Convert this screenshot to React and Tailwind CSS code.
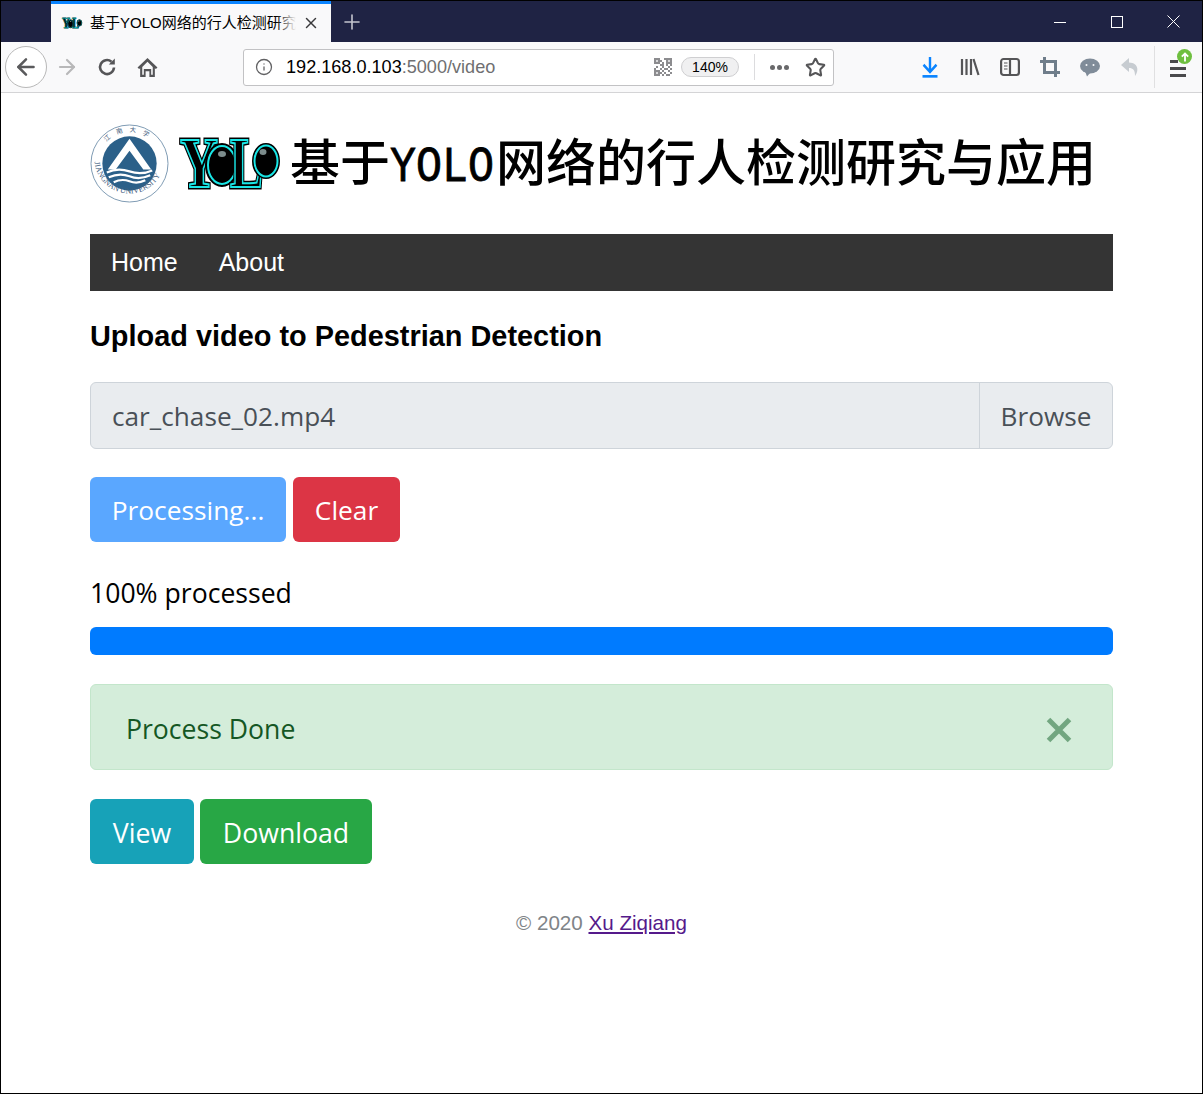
import { ArrowLeft, ArrowRight, Info, Star, X, Plus } from 'lucide-react'

const sans = { fontFamily: '"Liberation Sans", "Noto Sans CJK SC", sans-serif' }
const ui = { fontFamily: '"Open Sans", sans-serif' }

function YoloLogo({ className }) {
  const serif = { fontFamily: '"Liberation Serif", serif', fontWeight: 700 }
  const outer = { fill: '#000', stroke: '#000', strokeWidth: 5 }
  const inner = { fill: '#000', stroke: '#19e6e6', strokeWidth: 2 }
  return (
    <svg viewBox="0 0 100 54" className={`overflow-visible ${className}`}>
      <g style={serif}>
        <text x="1" y="50" fontSize="72" textLength="38" lengthAdjust="spacingAndGlyphs" {...outer}>Y</text>
        <text x="1" y="50" fontSize="72" textLength="38" lengthAdjust="spacingAndGlyphs" {...inner}>Y</text>
      </g>
      <ellipse cx="43" cy="28" rx="15" ry="20" fill="#000" stroke="#000" strokeWidth="4" />
      <ellipse cx="43" cy="28" rx="14" ry="19" fill="#000" stroke="#19e6e6" strokeWidth="2" />
      <g style={serif}>
        <text x="51" y="50" fontSize="72" textLength="33" lengthAdjust="spacingAndGlyphs" {...outer}>L</text>
        <text x="51" y="50" fontSize="72" textLength="33" lengthAdjust="spacingAndGlyphs" {...inner}>L</text>
      </g>
      <ellipse cx="87" cy="24" rx="12" ry="16" fill="#000" stroke="#000" strokeWidth="4" />
      <ellipse cx="87" cy="24" rx="11.500" ry="15.500" fill="#000" stroke="#19e6e6" strokeWidth="2" />
      <ellipse cx="43" cy="17" rx="4" ry="3" fill="#7c8c8c" />
      <ellipse cx="84" cy="15" rx="3.500" ry="3" fill="#7c8c8c" />
    </svg>
  )
}

function Emblem({ className }) {
  return (
    <svg viewBox="0 0 80 80" className={className}>
      <circle cx="40" cy="40" r="39" fill="#fff" stroke="#7e9ab3" strokeWidth="1" />
      <circle cx="40" cy="40" r="27.500" fill="#2b6089" />
      <path id="emblem-ring" d="M 4.500 35 A 35.500 35.500 0 0 0 75.500 35" fill="none" />
      <path d="M40 15 L62 46 L54 46 L40 27 L26 46 L18 46 Z" fill="#fff" />
      <path d="M17 49 Q28 44 40 48 T63 47 M19 54 Q30 49 40 53 T61 52 M24 59 Q32 55 40 58 T56 57" fill="none" stroke="#fff" strokeWidth="2.200" />
      <text fontSize="8" fill="#3f6080" style={{ fontFamily: '"Liberation Serif", serif' }}>
        <textPath href="#emblem-ring" startOffset="3%">JIANGNAN UNIVERSITY</textPath>
      </text>
      <path id="emblem-top" d="M 8 40 A 32 32 0 0 1 72 40" fill="none" />
      <text fontSize="6.500" fill="#3f6080" style={{ fontFamily: '"Noto Sans CJK SC", sans-serif' }}>
        <textPath href="#emblem-top" startOffset="24%">江　南　大　学</textPath>
      </text>
    </svg>
  )
}

function BrowserChrome() {
  return (
    <>
      <div className="h-[41px] bg-[#1f2344] flex items-stretch">
        <div className="w-[50px]" />
        <div className="w-[280px] bg-[#f9f9fa] border-t-[3px] border-[#0a84ff] flex items-center pl-[11px] pr-[11px]">
          <YoloLogo className="w-5 h-[11px] shrink-0" />
          <div className="ml-2 flex-1 relative overflow-hidden">
            <span className="block text-[15px] leading-[20px] text-black whitespace-nowrap" style={sans}>基于YOLO网络的行人检测研究</span>
            <div className="absolute inset-y-0 right-0 w-5 bg-gradient-to-r from-transparent to-[#f9f9fa]" />
          </div>
          <X size={18} strokeWidth={2} className="text-[#3a3a3c] ml-[6px] shrink-0" />
        </div>
        <div className="w-[42px] flex items-center justify-center">
          <Plus size={24} strokeWidth={1.6} className="text-[#c4c5ce]" />
        </div>
        <div className="flex-1" />
        <div className="flex items-center">
          <svg viewBox="0 0 12 12" className="w-3 h-3 mr-[45px]" stroke="#fff" fill="none" shapeRendering="crispEdges"><path d="M0 6.500H12" /></svg>
          <svg viewBox="0 0 12 12" className="w-3 h-3 mr-[44px]" stroke="#fff" fill="none" shapeRendering="crispEdges"><rect x="0.500" y="0.500" width="11" height="11" /></svg>
          <svg viewBox="0 0 13 13" className="w-[13px] h-[13px] mr-[22px]" stroke="#fff" fill="none"><path d="M0.500 0.500L12.500 12.500M12.500 0.500L0.500 12.500" /></svg>
        </div>
      </div>
      <div className="h-[51px] bg-[#f9f9fa] border-b border-[#d4d4d6] flex items-center relative">
        <div className="ml-[4px] w-[42px] h-[42px] rounded-full border border-[#b8b8b8] bg-white flex items-center justify-center shrink-0">
          <ArrowLeft size={26} strokeWidth={2.3} className="text-[#5a5a5c]" />
        </div>
        <ArrowRight size={24} strokeWidth={2.2} className="ml-[8px] text-[#b8b8b9] shrink-0" />
        <svg viewBox="0 0 20 20" className="ml-[18px] w-5 h-5 shrink-0" fill="none" stroke="#555557" strokeWidth="2.600">
          <path d="M17 10.500A7 7 0 1 1 14.500 4.700" />
          <path d="M17.800 1.500V7.500H11.800Z" fill="#555557" stroke="none" />
        </svg>
        <svg viewBox="0 0 20 20" className="ml-[20px] w-[21px] h-[21px] shrink-0" fill="#555557">
          <path d="M10 1 L0.500 10 L2 11.500 L3 10.700 V19 H8.200 V13.500 H11.800 V19 H17 V10.700 L18 11.500 L19.500 10 Z" />
          <path d="M5 9.500 L10 4.500 L15 9.500 V17 H13.500 V11.500 H6.500 V17 H5 Z" fill="#f9f9fa" />
        </svg>
        <div className="ml-[85px] w-[591px] h-[37px] rounded-[3px] border border-[#c2c2c4] bg-white flex items-center pl-[11px] pr-[7px] shrink-0">
          <Info size={18} strokeWidth={1.7} className="text-[#616163]" />
          <span className="ml-[13px] mt-[2px] text-[18.100px] text-black" style={sans}>192.168.0.103<span className="text-[#6f6f71]">:5000/video</span></span>
          <div className="flex-1" />
          {/* QR: damier serre */}
          <svg viewBox="0 0 9 9" className="w-[18px] h-[18px]" shapeRendering="crispEdges" fill="#8c8c8f">
            <path d="M0 0h3v3h-3z M6 0h3v3h-3z M0 6h3v3h-3z M3 1h1v1h-1z M5 0h1v1h-1z M4 2h1v1h-1z M3 3h2v1h-2z M6 3h1v1h-1z M8 3h1v1h-1z M1 4h1v1h-1z M4 4h1v1h-1z M7 4h1v1h-1z M0 5h1v1h-1z M3 5h1v1h-1z M5 5h2v1h-2z M8 5h1v1h-1z M4 6h1v1h-1z M7 6h1v1h-1z M3 7h1v1h-1z M5 7h1v1h-1z M8 7h1v1h-1z M4 8h1v1h-1z M6 8h2v1h-2z" />
            <path d="M1 1h1v1h-1z M7 1h1v1h-1z M1 7h1v1h-1z" fill="#d8d8da" />
          </svg>
          <div className="ml-[9px] w-[58px] h-[20px] rounded-full border border-[#cfcfd1] bg-[#f0f0f1] flex items-center justify-center text-[14px] text-black" style={sans}>140%</div>
          <div className="ml-[15px] w-px h-[26px] bg-[#dcdcde]" />
          <div className="ml-[15px] flex gap-[2px]">
            <span className="w-[5px] h-[5px] rounded-full bg-[#69696b]" />
            <span className="w-[5px] h-[5px] rounded-full bg-[#69696b]" />
            <span className="w-[5px] h-[5px] rounded-full bg-[#69696b]" />
          </div>
          <Star size={21} strokeWidth={2.4} className="ml-[16px] text-[#555557]" />
        </div>
        <svg viewBox="0 0 20 20" className="ml-[86px] w-5 h-[22px] shrink-0" fill="none" stroke="#0a84ff" strokeWidth="2.400" preserveAspectRatio="none">
          <path d="M10 1V14 M3.500 8L10 14.500L16.500 8" />
          <path d="M2.500 18.500H17.500" />
        </svg>
        <svg viewBox="0 0 20 20" className="ml-[20px] w-5 h-5 shrink-0" fill="none" stroke="#555557" strokeWidth="2.200">
          <path d="M2 2V18 M6.500 2V18 M11 2V18 M13.500 2L18.500 18" />
        </svg>
        <svg viewBox="0 0 20 20" className="ml-[20px] w-5 h-5 shrink-0" fill="none" stroke="#555557" strokeWidth="2.200">
          <rect x="1.100" y="2" width="17.800" height="16" rx="2.500" />
          <path d="M10 2V18" />
          <path d="M4 6H7.500M4 9H7.500M4 12H7.500" strokeWidth="1.200" />
        </svg>
        <svg viewBox="0 0 20 20" className="ml-[20px] w-5 h-5 shrink-0" fill="none" stroke="#6f7d8a" strokeWidth="3">
          <path d="M4.500 0V15.500H20" />
          <path d="M0 4.500H15.500V20" />
        </svg>
        <svg viewBox="0 0 20 20" className="ml-[20px] w-5 h-5 shrink-0" fill="#808c99">
          <ellipse cx="10" cy="9" rx="10" ry="7.500" />
          <path d="M5 14 L7 19.500 L11 15 Z" />
          <circle cx="6.500" cy="8" r="1" fill="#f9f9fa" />
          <circle cx="13.500" cy="8" r="1" fill="#f9f9fa" />
        </svg>
        <svg viewBox="0 0 20 20" className="ml-[20px] w-5 h-5 shrink-0" fill="#c7ccd1">
          <path d="M9 1 L1 8 L9 15 V11 C13 11 15 13 15 19 C18.500 15 19.500 6 9 5.500 Z" />
        </svg>
        <div className="ml-[14px] w-px h-[42px] bg-[#e0e0e1] shrink-0" />
        <div className="ml-[15px] relative flex flex-col gap-[4px] w-[16px] shrink-0 mt-[3px]">
          <span className="h-[3px] bg-[#4a4a4c] w-[8px]" />
          <span className="h-[3px] bg-[#4a4a4c]" />
          <span className="h-[3px] bg-[#4a4a4c]" />
          <div className="absolute -top-[11px] left-[7px] w-[15px] h-[15px] rounded-full bg-[#6ebf3f] flex items-center justify-center">
            <svg viewBox="0 0 10 10" className="w-[10px] h-[10px]" fill="none" stroke="#fff" strokeWidth="1.800">
              <path d="M5 9.500V1.500 M1.800 4.700L5 1.500L8.200 4.700" />
            </svg>
          </div>
        </div>
      </div>
    </>
  )
}

function App() {
  return (
    <div className="w-[1203px] h-[1094px] border border-black bg-white overflow-hidden" style={sans}>
      <BrowserChrome />
      <div className="px-[89px]">
        {/* Titre */}
        <div className="pt-[31px] flex items-center h-[141px] pb-[31px]">
          <Emblem className="w-[79px] h-[79px] shrink-0" />
          <YoloLogo className="ml-[10px] w-[100px] h-[54px] shrink-0" />
          <h1 className="ml-[11px] text-[50px] leading-none whitespace-nowrap text-black font-medium" style={{ fontFamily: '"Noto Sans CJK SC", sans-serif' }}>
            基于<span className="inline-block w-[106px]"><span className="inline-block font-normal origin-left scale-x-[0.867] [-webkit-text-stroke:0.8px_#000]" style={{ fontFamily: '"Liberation Mono", monospace' }}>YOLO</span></span>网络的行人检测研究与应用
          </h1>
        </div>

        {/* Navigation */}
        <nav className="h-[57px] bg-[#343434] flex items-center text-white text-[25px] pl-[21px] gap-[41px]">
          <span>Home</span>
          <span>About</span>
        </nav>

        <h2 className="mt-[28px] text-[28.900px] leading-[34px] font-bold text-black">Upload video to Pedestrian Detection</h2>

        {/* Fichier */}
        <div className="mt-[29px] h-[67px] rounded-[6px] border border-[#ced4da] bg-[#e9ecef] flex items-center pt-[2px] text-[26.200px] text-[#495057]" style={ui}>
          <span className="flex-1 pl-[21px]">car_chase_02.mp4</span>
          <span className="h-[65px] -mt-[2px] pt-[2px] border-l border-[#ced4da] flex items-center w-[133px] justify-center">Browse</span>
        </div>

        <div className="mt-[28px] flex gap-[7px] text-[26.300px] text-white" style={ui}>
          <div className="h-[65px] w-[196px] rounded-[6px] bg-[#5aa7ff] flex items-center justify-center pt-[2px]">Processing...</div>
          <div className="h-[65px] w-[107px] rounded-[6px] bg-[#dc3545] flex items-center justify-center pt-[2px]">Clear</div>
        </div>

        <div className="mt-[32px] text-[26.600px] leading-[38px] text-black" style={ui}>100% processed</div>
        <div className="mt-[15px] h-[28px] rounded-[6px] bg-[#007bff]" />

        <div className="mt-[29px] h-[86px] rounded-[6px] border border-[#c3e6cb] bg-[#d4edda] flex items-center pt-[6px] text-[26.600px] text-[#155724] pl-[35px]" style={ui}>
          <span className="flex-1">Process Done</span>
          <svg viewBox="0 0 26 26" className="w-[26px] h-[26px] mr-[40px]" fill="none" stroke="#72a680" strokeWidth="5">
            <path d="M2.500 2.500L23.500 23.500M23.500 2.500L2.500 23.500" />
          </svg>
        </div>

        <div className="mt-[29px] flex gap-[6px] text-[26.700px] text-white" style={ui}>
          <div className="h-[65px] w-[104px] rounded-[6px] bg-[#17a2b8] flex items-center justify-center pt-[4px]">View</div>
          <div className="h-[65px] w-[172px] rounded-[6px] bg-[#28a745] flex items-center justify-center pt-[4px]">Download</div>
        </div>

        <p className="mt-[46px] text-center text-[20.600px] leading-[26px] text-[#808488]">© 2020 <a href="#" className="underline text-[#551a8b]">Xu Ziqiang</a></p>
      </div>
    </div>
  )
}

export default App
